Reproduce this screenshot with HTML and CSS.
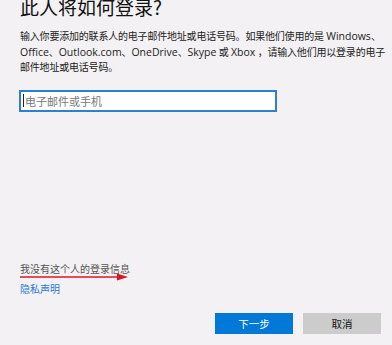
FILE: index.html
```html
<!DOCTYPE html>
<html lang="zh-CN">
<head>
    <meta charset="UTF-8">
    <meta name="viewport" content="width=device-width, initial-scale=1.0">
    <title>此人将如何登录?</title>
    <link rel="stylesheet" href="styles.css">
</head>
<body>
    <div class="page">
        <h1 class="title">此人将如何登录?</h1>
        <p class="intro">输入你要添加的联系人的电子邮件地址或电话号码。如果他们使用的是 <span class="en">Windows</span>、<span class="en">Office</span>、<span class="en">Outlook.com</span>、<span class="en">OneDrive</span>、<span class="en">Skype</span> 或 <span class="en">Xbox</span> ，请输入他们用以登录的电子邮件地址或电话号码。</p>

        <div class="field">
            <span class="caret"></span>
            <span class="placeholder">电子邮件或手机</span>
        </div>

        <div class="links">
            <a class="link-muted" href="#">我没有这个人的登录信息
                <svg class="mark" width="110" height="8" viewBox="0 0 110 8">
                    <line x1="0" y1="4" x2="100" y2="4" stroke="#e0141e" stroke-width="1.4"/>
                    <polygon points="97,0.5 108,4 97,7.5" fill="#e0141e"/>
                </svg>
            </a>
            <a class="link" href="#">隐私声明</a>
        </div>

        <div class="actions">
            <button class="btn primary">下一步</button>
            <button class="btn">取消</button>
        </div>
    </div>
</body>
</html>
```

FILE: styles.css
```css
html, body {
    margin: 0;
    height: 100%;
}
body {
    background: #f3f1f3;
    font-family: "Open Sans", "Noto Sans CJK SC", sans-serif;
    color: #1a1a1a;
    overflow: hidden;
}
.page {
    height: 345px;
    box-sizing: border-box;
    padding: 0 11px 11px 20px;
    display: flex;
    flex-direction: column;
}
.title {
    margin: -7px 0 0;
    font-family: "Noto Sans CJK SC", sans-serif;
    font-size: 19px;
    font-weight: normal;
    line-height: 28px;
    color: #111;
}
.intro {
    margin: 8px -6px 0 0;
    font-size: 10px;
    line-height: 15.5px;
    letter-spacing: -0.2px;
    color: #222;
}
.intro .en {
    font-size: 10.5px;
    letter-spacing: 0;
}
.field {
    margin: 14px 0 0 -1px;
    width: 250px;
    height: 18px;
    border: 2px solid #2d7fd2;
    background: #fff;
    display: flex;
    align-items: center;
    padding: 0 2px;
}
.caret {
    width: 1px;
    height: 13px;
    background: #222;
    margin-right: 1px;
}
.placeholder {
    font-size: 11px;
    color: #777;
}
.links {
    margin-top: auto;
    display: flex;
    flex-direction: column;
    align-items: flex-start;
    gap: 5px;
    font-size: 10px;
    line-height: 15px;
}
.link-muted {
    position: relative;
    color: #555;
    text-decoration: none;
}
.mark {
    position: absolute;
    left: 0;
    top: 11px;
}
.link {
    color: #2a7ad0;
    text-decoration: none;
}
.actions {
    margin-top: 16px;
    display: flex;
    justify-content: flex-end;
    gap: 10px;
}
.btn {
    width: 78px;
    height: 21px;
    border: none;
    padding: 0;
    background: #cccccc;
    color: #111;
    font-family: inherit;
    font-size: 10.5px;
}
.btn.primary {
    background: #0078d7;
    color: #fff;
}
```
